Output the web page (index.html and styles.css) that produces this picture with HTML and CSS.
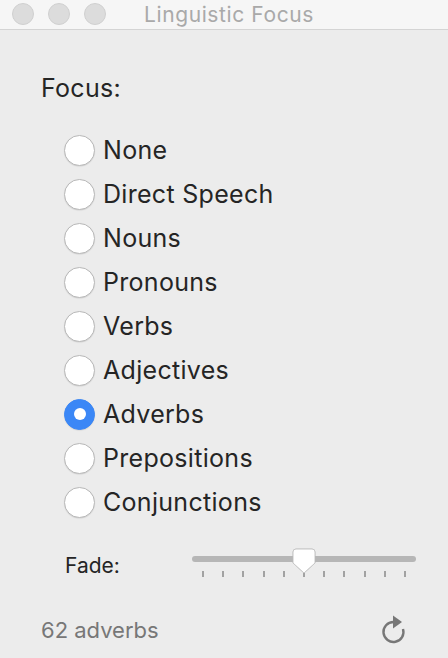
FILE: index.html
```html
<!DOCTYPE html>
<html lang="en">
<head>
  <meta charset="UTF-8" />
  <meta name="viewport" content="width=device-width, initial-scale=1" />
  <title>Linguistic Focus</title>
  <link rel="stylesheet" href="styles.css">
</head>
<body>
  <div class="window">
    <header class="titlebar">
      <div class="lights">
        <span class="light"></span>
        <span class="light"></span>
        <span class="light"></span>
      </div>
      <div class="title">Linguistic Focus</div>
    </header>

    <main class="content">
      <div class="focus-label">Focus:</div>
      <ul class="options">
        <li><span class="radio"></span>None</li>
        <li><span class="radio"></span>Direct Speech</li>
        <li><span class="radio"></span>Nouns</li>
        <li><span class="radio"></span>Pronouns</li>
        <li><span class="radio"></span>Verbs</li>
        <li><span class="radio"></span>Adjectives</li>
        <li><span class="radio checked"></span>Adverbs</li>
        <li><span class="radio"></span>Prepositions</li>
        <li><span class="radio"></span>Conjunctions</li>
      </ul>

      <div class="fade-row">
        <span class="fade-label">Fade:</span>
        <div class="slider">
          <div class="track"></div>
          <div class="ticks">
            <span></span><span></span><span></span><span></span><span></span><span></span>
            <span></span><span></span><span></span><span></span><span></span>
          </div>
          <svg class="thumb" width="24" height="26" viewBox="0 0 24 26">
            <path d="M4 1 H20 Q23 1 23 4 V15 L12 25 L1 15 V4 Q1 1 4 1 Z" fill="#fff" stroke="#c6c6c6" stroke-width="1"/>
          </svg>
        </div>
      </div>

      <div class="status">
        <span class="count">62 adverbs</span>
        <svg class="reload" width="26" height="30" viewBox="0 0 26 30">
          <path d="M12.5 7 A10 10 0 1 0 22 14" fill="none" stroke="#777" stroke-width="2.4"/>
          <path d="M12 0.5 L21 7 L12 13.5 Z" fill="#777"/>
        </svg>
      </div>
    </main>
  </div>
</body>
</html>
```

FILE: styles.css
```css
body {
  margin: 0;
  padding: 0;
  font-family: Inter, "Liberation Sans", sans-serif;
  background: #ececec;
  color: #252525;
}
.window {
  width: 448px;
  height: 658px;
  background: #ececec;
  overflow: hidden;
}
.titlebar {
  position: relative;
  height: 29px;
  background: #f6f6f6;
  border-bottom: 1px solid #d4d4d4;
  display: flex;
  align-items: center;
  justify-content: center;
}
.lights {
  position: absolute;
  left: 12px;
  top: 3px;
  display: flex;
  gap: 14px;
}
.light {
  width: 20px;
  height: 20px;
  border-radius: 50%;
  background: #dcdcdc;
  border: 1px solid #d0d0d0;
}
.title {
  font-size: 21px;
  letter-spacing: 0.6px;
  color: #a9a9a9;
  padding-left: 10px;
  line-height: 29px;
}
.content {
  padding: 43px 0 0 41px;
}
.focus-label {
  font-size: 25px;
  letter-spacing: 0.3px;
  line-height: 30px;
}
.options {
  list-style: none;
  margin: 25px 0 0 0;
  padding: 0 0 0 23px;
}
.options li {
  height: 44px;
  display: flex;
  align-items: center;
  gap: 8px;
  font-size: 25px;
  letter-spacing: 0.3px;
}
.radio {
  width: 29px;
  height: 29px;
  border-radius: 50%;
  background: #fff;
  border: 1px solid #b9b9b9;
  box-shadow: 0 0.5px 1px rgba(0,0,0,0.12);
  display: flex;
  align-items: center;
  justify-content: center;
}
.radio.checked {
  background: #3b87f6;
  border-color: #3b87f6;
}
.radio.checked::after {
  content: "";
  width: 12px;
  height: 12px;
  border-radius: 50%;
  background: #fff;
}
.fade-row {
  display: flex;
  align-items: center;
  height: 40px;
  margin-top: 21px;
  padding-left: 24px;
}
.fade-label {
  width: 127px;
  font-size: 21px;
}
.slider {
  position: relative;
  width: 224px;
  height: 40px;
}
.track {
  position: absolute;
  left: 0;
  right: 0;
  top: 11px;
  height: 6px;
  border-radius: 3px;
  background: #b6b6b6;
}
.ticks {
  position: absolute;
  left: 10px;
  right: 10px;
  top: 26px;
  display: flex;
  justify-content: space-between;
}
.ticks span {
  width: 2px;
  height: 6px;
  background: #a2a2a2;
}
.thumb {
  position: absolute;
  left: 100px;
  top: 3px;
  filter: drop-shadow(0 0.5px 0.5px rgba(0,0,0,0.15));
}
.status {
  display: flex;
  align-items: center;
  justify-content: space-between;
  height: 40px;
  margin-top: 25px;
  padding-right: 41px;
}
.count {
  font-size: 22px;
  color: #777;
}
.reload {
  display: block;
}
```
